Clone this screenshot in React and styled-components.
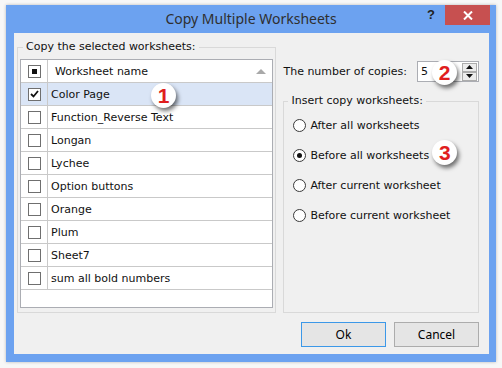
import styled, { createGlobalStyle } from 'styled-components'

const GlobalStyle = createGlobalStyle`
  html, body {
    margin: 0;
    padding: 0;
    background: #f7f7f7;
  }
  body {
    font-family: "DejaVu Sans", "Liberation Sans", sans-serif;
    font-size: 11px;
    color: #111;
  }
`

const Page = styled.div`
  width: 502px;
  height: 368px;
  padding: 5px 6px 6px;
  box-sizing: border-box;
`

const Window = styled.div`
  width: 490px;
  height: 357px;
  background: #6ca2f0;
  display: flex;
  flex-direction: column;
  box-shadow: 0 0 3px rgba(0, 0, 0, 0.25);
`

const TitleBar = styled.div`
  height: 28px;
  display: grid;
  grid-template-columns: 1fr auto 1fr;
  align-items: start;
`

const Title = styled.div`
  grid-column: 2;
  line-height: 28px;
  font-family: "Noto Sans", sans-serif;
  font-size: 14px;
  color: #2f2f2f;
`

const Controls = styled.div`
  grid-column: 3;
  justify-self: end;
  display: flex;
  margin-right: 6px;
`

const HelpButton = styled.div`
  width: 26px;
  height: 20px;
  margin-right: 1px;
  line-height: 20px;
  text-align: center;
  font-family: "Liberation Sans", sans-serif;
  font-weight: bold;
  font-size: 13px;
  color: #222;
`

const CloseButton = styled.div`
  width: 45px;
  height: 20px;
  background: #c75050;
  display: flex;
  align-items: center;
  justify-content: center;
`

const Client = styled.div`
  flex: 1;
  margin: 0 7px 8px 8px;
  background: #f0f0f0;
  display: flex;
  flex-direction: column;
  padding: 7px 10px 7px 3px;
`

const MainRow = styled.div`
  display: flex;
  gap: 7px;
  height: 273px;
`

const Group = styled.fieldset`
  margin: 0;
  border: 1px solid #d9d9d9;
  box-sizing: border-box;
  min-width: 0;
  padding: ${p => p.$pad};
`

const Legend = styled.legend`
  margin-left: ${p => p.$offset}px;
  padding: 0 3px;
  line-height: 14px;
  font-size: 11px;
`

const SheetGroup = styled(Group)`
  width: 260px;
  height: 273px;
`

const List = styled.div`
  height: 249px;
  box-sizing: border-box;
  border: 1px solid #abadb3;
  background: #fff;
`

const Row = styled.div`
  position: relative;
  display: flex;
  height: 23px;
  box-sizing: border-box;
  border-bottom: 1px solid #c9c9c9;
  background: ${p => (p.$selected ? '#dae5f6' : 'transparent')};
`

const CheckCell = styled.div`
  width: 26px;
  border-right: 1px solid #c9c9c9;
  display: flex;
  align-items: center;
  justify-content: center;
`

const NameCell = styled.div`
  flex: 1;
  display: flex;
  align-items: center;
  justify-content: space-between;
  padding: 0 6px 0 ${p => (p.$header ? 7 : 3)}px;
  white-space: nowrap;
`

const Box = styled.span`
  width: 13px;
  height: 13px;
  box-sizing: border-box;
  border: 1px solid #6f6f6f;
  background: #fff;
  display: flex;
  align-items: center;
  justify-content: center;
`

const MixedMark = styled.span`
  width: 5px;
  height: 5px;
  background: #111;
`

const RightPanel = styled.div`
  width: 196px;
  display: flex;
  flex-direction: column;
`

const CopiesRow = styled.div`
  margin-top: 21px;
  height: 21px;
  display: flex;
  align-items: center;
`

const Spinner = styled.div`
  position: relative;
  margin-left: auto;
  width: 62px;
  height: 21px;
  box-sizing: border-box;
  border: 1px solid #abadb3;
  background: #fff;
  display: flex;
  align-items: center;
  padding: 0 1px 0 3px;
`

const SpinValue = styled.span`
  flex: 1;
`

const SpinButtons = styled.div`
  display: flex;
  flex-direction: column;
`

const SpinButton = styled.div`
  width: 15px;
  height: 9px;
  box-sizing: border-box;
  border: 1px solid #acacac;
  background: #ececec;
  display: flex;
  align-items: center;
  justify-content: center;
`

const InsertGroup = styled(Group)`
  margin-top: 12px;
  flex: 1;
`

const RadioRow = styled.label`
  position: relative;
  height: 30px;
  display: flex;
  align-items: center;
  gap: 4px;
  margin-left: 5px;
`

const Radio = styled.span`
  width: 13px;
  height: 13px;
  box-sizing: border-box;
  border-radius: 50%;
  border: 1px solid #3a3a3a;
  background: #fff;
  display: flex;
  align-items: center;
  justify-content: center;
  &::after {
    content: '';
    width: 5px;
    height: 5px;
    border-radius: 50%;
    background: ${p => (p.$checked ? '#111' : 'transparent')};
  }
`

const Radios = styled.div`
  padding-top: 2px;
`

const ButtonRow = styled.div`
  margin-top: 9px;
  display: flex;
  justify-content: flex-end;
  gap: 8px;
`

const Button = styled.button`
  width: 85px;
  height: 25px;
  margin: 0;
  border: 1px solid ${p => (p.$focused ? '#3c98e8' : '#acacac')};
  background: #e5e5e5;
  font-family: "Noto Sans", sans-serif;
  font-size: 12px;
  color: #000;
  padding: 0;
`

const Badge = styled.span`
  position: absolute;
  left: ${p => p.$x}px;
  top: ${p => p.$y}px;
  width: 25px;
  height: 25px;
  border-radius: 50%;
  background: #fff;
  box-shadow: 2px 3px 4px rgba(0, 0, 0, 0.55);
  display: flex;
  align-items: center;
  justify-content: center;
  font-family: "Liberation Sans", sans-serif;
  font-weight: bold;
  font-size: 21px;
  color: #e01e1e;
`

const sheets = [
  'Color Page',
  'Function_Reverse Text',
  'Longan',
  'Lychee',
  'Option buttons',
  'Orange',
  'Plum',
  'Sheet7',
  'sum all bold numbers',
]

const options = [
  'After all worksheets',
  'Before all worksheets',
  'After current worksheet',
  'Before current worksheet',
]

const Tick = () => (
  <svg width="9" height="8" viewBox="0 0 9 8">
    <path d="M1 4 L3.5 6.5 L8 1" fill="none" stroke="#111" strokeWidth="1.8" />
  </svg>
)

const Arrow = ({ up }) => (
  <svg width="7" height="4" viewBox="0 0 7 4">
    <path d={up ? 'M0 4 L3.5 0 L7 4 Z' : 'M0 0 L3.5 4 L7 0 Z'} fill="#111" />
  </svg>
)

export default function App() {
  return (
    <>
      <GlobalStyle />
      <Page>
        <Window>
          <TitleBar>
            <Title>Copy Multiple Worksheets</Title>
            <Controls>
              <HelpButton>?</HelpButton>
              <CloseButton>
                <svg width="10" height="9" viewBox="0 0 10 9">
                  <path d="M1 0.5 L9 8.5 M9 0.5 L1 8.5" stroke="#fff" strokeWidth="2" />
                </svg>
              </CloseButton>
            </Controls>
          </TitleBar>
          <Client>
            <MainRow>
              <SheetGroup $pad="5px 2px 4px 2px">
                <Legend $offset={3}>Copy the selected worksheets:</Legend>
                <List>
                  <Row>
                    <CheckCell>
                      <Box>
                        <MixedMark />
                      </Box>
                    </CheckCell>
                    <NameCell $header>
                      Worksheet name
                      <svg width="10" height="5" viewBox="0 0 10 5">
                        <path d="M0 5 L5 0 L10 5 Z" fill="#a9a9a9" />
                      </svg>
                    </NameCell>
                  </Row>
                  {sheets.map((name, i) => (
                    <Row key={name} $selected={i === 0}>
                      <CheckCell>
                        <Box>{i === 0 && <Tick />}</Box>
                      </CheckCell>
                      <NameCell>{name}</NameCell>
                      {i === 0 && <Badge $x={130} $y={0}>1</Badge>}
                    </Row>
                  ))}
                </List>
              </SheetGroup>
              <RightPanel>
                <CopiesRow>
                  The number of copies:
                  <Spinner>
                    <SpinValue>5</SpinValue>
                    <SpinButtons>
                      <SpinButton>
                        <Arrow up />
                      </SpinButton>
                      <SpinButton>
                        <Arrow />
                      </SpinButton>
                    </SpinButtons>
                    <Badge $x={14} $y={-2}>2</Badge>
                  </Spinner>
                </CopiesRow>
                <InsertGroup $pad="0 0 0 4px">
                  <Legend $offset={0}>Insert copy worksheets:</Legend>
                  <Radios>
                    {options.map((opt, i) => (
                      <RadioRow key={opt}>
                        <Radio $checked={i === 1} />
                        {opt}
                        {i === 1 && <Badge $x={139} $y={0}>3</Badge>}
                      </RadioRow>
                    ))}
                  </Radios>
                </InsertGroup>
              </RightPanel>
            </MainRow>
            <ButtonRow>
              <Button $focused>Ok</Button>
              <Button>Cancel</Button>
            </ButtonRow>
          </Client>
        </Window>
      </Page>
    </>
  )
}
